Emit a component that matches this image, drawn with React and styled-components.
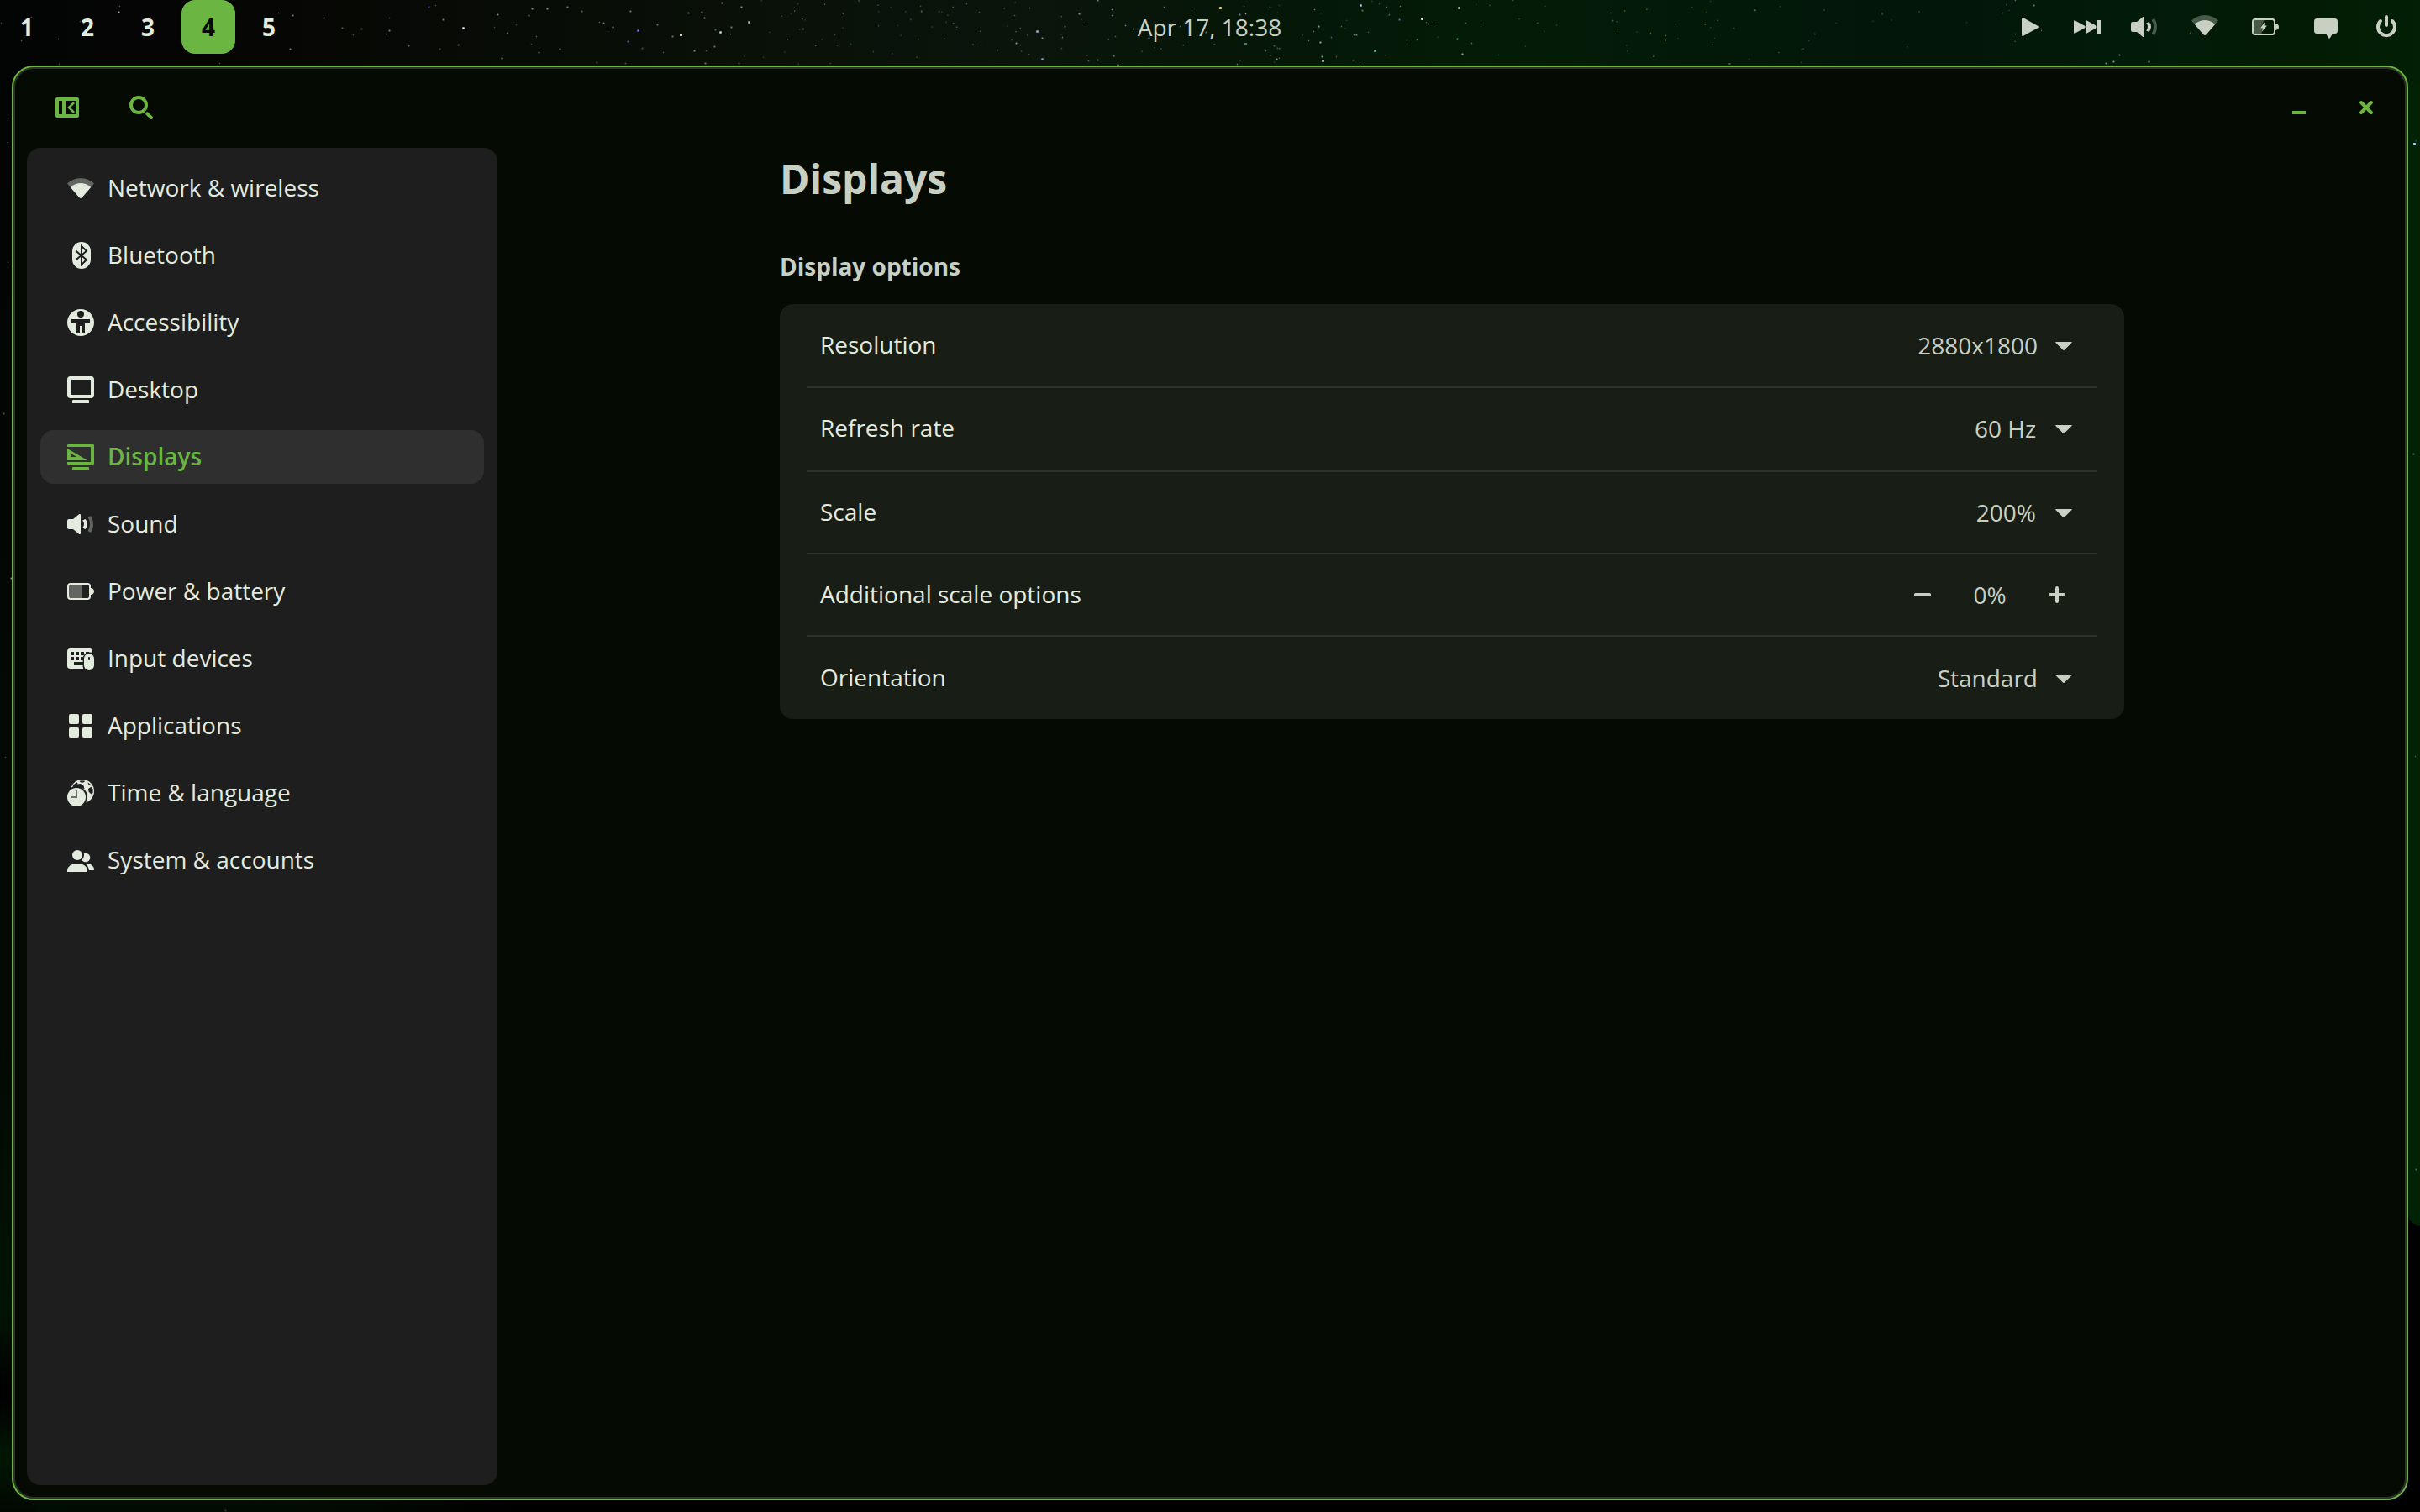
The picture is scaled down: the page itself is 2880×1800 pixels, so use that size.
import styled, { createGlobalStyle, css } from "styled-components";

const colors = {
  accent: "#6bb643",
  text: "#e3ebdf",
  muted: "#c8d0c4",
  window: "#050a03",
  windowEdge: "#2d302b",
  sidebar: "#1e1e1e",
  selected: "#2f2f2f",
  card: "#181d15",
  divider: "#2d322c",
};

// x, y, size, colour
const brightStars = [
  [141, 14, 2, "#d9c9c2"], [142, 7, 1.5, "#7c5c54"], [331, 15, 1.5, "#777"], [348, 18, 2, "#999"],
  [385, 21, 2, "#888"], [345, 58, 2, "#999"], [69, 46, 1.5, "#666"], [25, 48, 1.5, "#667"],
  [37, 20, 1.5, "#666"], [95, 25, 1.5, "#555"], [179, 21, 1.5, "#777"], [1, 27, 1.5, "#2c6a5c"],
  [70, 76, 1.5, "#555"], [261, 75, 1.5, "#555"], [9, 140, 1.5, "#666"], [9, 169, 1.5, "#888"],
  [510, 8, 2, "#5b5be8"], [518, 6, 1.5, "#555"], [551, 33, 2.5, "#e6ecf2"], [527, 23, 2, "#8a9a8a"],
  [463, 36, 2, "#999"], [463, 21, 1.5, "#555"], [407, 33, 2, "#667766"], [430, 34, 2, "#555"],
  [420, 41, 1.5, "#666"], [459, 40, 1.5, "#666"], [486, 54, 2, "#777"], [523, 58, 2, "#555"],
  [545, 53, 2, "#666"], [597, 69, 2, "#bbb"], [592, 17, 2, "#999"], [629, 18, 2, "#888"],
  [633, 10, 2, "#999"], [651, 10, 2, "#aaa"], [675, 8, 2, "#999"], [692, 13, 2, "#777"],
  [603, 39, 1.5, "#777"], [614, 29, 1.5, "#555"], [588, 32, 1.5, "#555"], [638, 43, 1.5, "#777"],
  [632, 52, 1.5, "#555"], [641, 62, 2, "#888"], [666, 58, 2, "#998"], [747, 49, 2, "#6262e8"],
  [759, 36, 2.5, "#6a70f0"], [810, 41, 3, "#f2e3c2"], [800, 43, 2, "#888"], [857, 38, 2.5, "#c9e2f2"],
  [819, 15, 2, "#7474e0"], [750, 13, 2, "#888"], [729, 32, 2, "#aaa"], [718, 27, 2, "#888"],
  [713, 26, 1.5, "#777"], [723, 37, 1.5, "#666"], [782, 29, 2, "#778877"], [838, 21, 2, "#aaa"],
  [835, 14, 2, "#888"], [859, 3, 2, "#999"], [882, 8, 2, "#aaa"], [891, 26, 2.5, "#b8c8b8"],
  [870, 32, 2, "#999"], [851, 35, 2, "#777"], [869, 40, 1.5, "#887"], [850, 55, 2, "#888"],
  [826, 60, 2, "#aaa"], [840, 60, 1.5, "#775"], [839, 75, 2, "#888"], [879, 75, 2, "#666"],
  [764, 57, 2, "#555"], [789, 62, 1.5, "#666"], [744, 75, 2, "#555"], [710, 74, 2, "#555"],
  [1207, 18, 1.5, "#666"], [1225, 9, 1.5, "#555"], [1234, 37, 2.5, "#a8c2f0"], [1240, 45, 2, "#aaa"],
  [1209, 51, 2, "#8aa8d8"], [1214, 53, 1.5, "#777"], [1284, 16, 2, "#aaa"], [1267, 31, 2, "#8a7a5a"],
  [1264, 44, 1.5, "#888"], [1240, 70, 2.5, "#7aa8e0"], [1263, 57, 1.5, "#555"], [1292, 28, 1.5, "#777"],
  [1323, 11, 1.5, "#aaa"], [1323, 18, 1.5, "#889"], [1306, 0, 2, "#999"], [1339, 30, 1.5, "#aaa"],
  [1348, 34, 1.5, "#5a9a8a"], [1325, 66, 2, "#999"], [1330, 77, 2, "#ccc"], [1306, 71, 2, "#888"],
  [1295, 72, 1.5, "#5a8a8a"], [1327, 43, 1.5, "#666"], [1452, 9, 3, "#f0cf7a"], [1385, 8, 1.5, "#888"],
  [1475, 17, 2, "#8aa8d0"], [1482, 16, 1.5, "#bbb"], [1480, 7, 1.5, "#777"], [1511, 8, 1.5, "#888"],
  [1418, 12, 1.5, "#665"], [1404, 31, 1.5, "#48a"], [1482, 52, 3, "#3a8a9a"], [1516, 54, 2, "#3a7a7a"],
  [1520, 57, 2, "#2f6a6a"], [1506, 60, 1.5, "#688"], [1519, 70, 2, "#aa9"], [1472, 76, 1.5, "#888"],
  [1367, 45, 2, "#6aa0e0"], [1435, 38, 2, "#68b"], [1619, 6, 2.5, "#b8c8ff"], [1621, 12, 2, "#8a7a2a"],
  [1564, 11, 1.5, "#999"], [1569, 31, 2, "#9ad0e8"], [1571, 50, 2, "#ccc"], [1584, 44, 1.5, "#4a8a9a"],
  [1563, 37, 1.5, "#785"], [1614, 41, 2, "#6aa8b8"], [1611, 41, 1.5, "#a95"], [1596, 31, 1.5, "#676"],
  [1636, 60, 2.5, "#6ad0c8"], [1573, 67, 2, "#aaa"], [1574, 72, 2.5, "#ddd"], [1590, 67, 1.5, "#666"],
  [1618, 74, 1.5, "#787"], [1557, 48, 1.5, "#777"], [1692, 22, 3, "#f5e3b0"], [1665, 23, 2, "#6a90c8"],
  [1650, 8, 1.5, "#777"], [1666, 7, 1.5, "#888"], [1668, 15, 1.5, "#775"], [1653, 17, 1.5, "#777"],
  [1700, 28, 1.5, "#a96"], [1706, 28, 1.5, "#887"], [1736, 9, 2.5, "#e8e6d8"], [1734, 46, 2, "#7fd0c8"],
  [1740, 64, 2, "#bcb"], [1751, 51, 1.5, "#787"], [1674, 48, 1.5, "#787"], [1686, 47, 1.5, "#787"],
  [1762, 28, 1.5, "#676"], [1744, 27, 1.5, "#585"], [2420, 6, 2, "#8a9a8a"], [2398, 0, 1.5, "#777"],
  [2383, 15, 1.5, "#585"], [2398, 40, 1.5, "#686"], [2429, 36, 1.5, "#475"], [2522, 65, 2, "#7a9a7a"],
  [2506, 75, 2, "#8aa88a"], [2515, 73, 2, "#9ab89a"], [2557, 73, 2, "#9ad0c0"], [2606, 39, 1.5, "#575"],
  [2873, 171, 3, "#9ad8e8"], [2875, 167, 2, "#2a5a3a"], [2875, 1392, 2, "#4a7a8a"], [13, 688, 2, "#9ab"],
  [4, 492, 2, "#666"], [9, 312, 1.5, "#666"], [6, 901, 1.5, "#555"], [2872, 540, 2, "#587"],
  [2874, 900, 1.5, "#475"], [268, 1798, 2, "#444"],
];

// faint dust between the brighter stars of the bar
const dust = Array.from({ length: 150 }, (_, i) => {
  const a = Math.abs(Math.sin(i * 12.9898 + 4.1) * 43758.5453) % 1;
  const b = Math.abs(Math.sin(i * 78.233 + 1.7) * 24634.6345) % 1;
  return [
    i < 60 ? 880 + a * 330 : i < 95 ? 1200 + a * 560 : 1760 + a * 640,
    b * 76,
    i % 9 === 0 ? 2 : 1.5,
    ["#3a4a3a", "#4f5c4f", "#2a4a3e", "#6c6c5c"][i % 4],
  ];
});

const GlobalStyle = createGlobalStyle`
  * {
    box-sizing: border-box;
  }
  body {
    margin: 0;
    background: #000;
    font-family: "Open Sans", "Noto Sans", sans-serif;
    font-size: 28px;
    line-height: 40px;
    color: ${colors.text};
    overflow: hidden;
  }
`;

const Desktop = styled.div`
  position: relative;
  width: 2880px;
  height: 1800px;
  display: flex;
  flex-direction: column;
`;

const WallpaperArt = styled.svg`
  position: absolute;
  inset: 0;
`;

const TopBar = styled.header`
  position: relative;
  display: grid;
  grid-template-columns: 1fr auto 1fr;
  align-items: center;
  height: 64px;
  color: ${colors.muted};
`;

const Workspaces = styled.nav`
  display: flex;
  gap: 8px;
`;

const Workspace = styled.button`
  width: 64px;
  height: 64px;
  padding: 0;
  border: 0;
  border-radius: 16px;
  background: transparent;
  color: ${colors.text};
  font: inherit;
  font-weight: 700;
  ${(props) =>
    props.$active &&
    css`
      background: ${colors.accent};
      color: #050a03;
    `}
`;

const Clock = styled.span`
  padding-right: 1px;
`;

const Tray = styled.div`
  display: flex;
  justify-content: flex-end;
  gap: 40px;
  padding-right: 24px;
`;

const MediaControls = styled.div`
  display: flex;
  gap: 36px;
  margin-right: -4px;
`;

const Icon = styled.svg.attrs({ viewBox: "0 0 32 32", width: 32, height: 32, fill: "currentColor" })`
  display: block;
  flex: none;
`;

const Window = styled.div`
  position: relative;
  flex: 1;
  display: flex;
  flex-direction: column;
  margin: 14px;
  border: 2px solid ${colors.accent};
  border-radius: 26px;
  background: ${colors.window};
  box-shadow: inset 0 0 0 2px ${colors.windowEdge};
  padding: 2px;
`;

const HeaderBar = styled.div`
  display: flex;
  justify-content: space-between;
  height: 94px;
  padding: 30px 30px 0 46px;
  color: ${colors.accent};
`;

const HeaderGroup = styled.div`
  display: flex;
  gap: ${(props) => props.$gap}px;
`;

const WindowBody = styled.div`
  flex: 1;
  display: flex;
  padding: 0 14px 14px;
`;

const Sidebar = styled.aside`
  width: 560px;
  padding: 16px;
  border-radius: 16px;
  background: ${colors.sidebar};
  display: flex;
  flex-direction: column;
  gap: 16px;
`;

const NavItem = styled.a`
  display: flex;
  align-items: center;
  gap: 16px;
  height: 64px;
  padding: 0 32px;
  border-radius: 16px;
  ${(props) =>
    props.$active &&
    css`
      background: ${colors.selected};
      color: ${colors.accent};
      font-weight: 600;
    `}
`;

const NavLabel = styled.span`
  padding-bottom: 2px;
`;

const Page = styled.main`
  width: 1600px;
  margin-left: 336px;
  color: ${colors.muted};
`;

const PageTitle = styled.h1`
  margin: 0;
  padding-top: 3px;
  font-size: 48px;
  line-height: 68px;
  font-weight: 700;
`;

const SectionTitle = styled.h2`
  margin: 50px 0 25px;
  font-size: 28px;
  line-height: 40px;
  font-weight: 700;
`;

const Card = styled.section`
  padding: 0 32px;
  border-radius: 16px;
  background: ${colors.card};
`;

const Row = styled.div`
  display: flex;
  align-items: center;
  justify-content: space-between;
  height: ${(props) => props.$height}px;
  padding: 0 24px ${(props) => props.$bottom || 0}px 16px;
  & + & {
    border-top: 2px solid ${colors.divider};
  }
`;

const RowLabel = styled.span`
  padding-bottom: 2px;
  color: ${colors.text};
`;

const Dropdown = styled.div`
  display: flex;
  align-items: center;
  gap: ${(props) => props.$gap}px;
`;

const Stepper = styled.div`
  display: grid;
  grid-template-columns: 32px 128px 32px;
  align-items: center;
  text-align: center;
  margin-right: 8px;
`;

function Wallpaper() {
  return (
    <WallpaperArt width="2880" height="1800" viewBox="0 0 2880 1800">
      <defs>
        <linearGradient id="sky">
          <stop offset="0" stopColor="#030404" />
          <stop offset="0.12" stopColor="#060704" />
          <stop offset="0.3" stopColor="#091008" />
          <stop offset="0.43" stopColor="#0a150c" />
          <stop offset="0.5" stopColor="#061607" />
          <stop offset="0.62" stopColor="#031c07" />
          <stop offset="0.8" stopColor="#02160a" />
          <stop offset="0.9" stopColor="#021c09" />
          <stop offset="0.95" stopColor="#031a03" />
          <stop offset="1" stopColor="#022006" />
        </linearGradient>
        <linearGradient id="leftEdge" x2="0" y2="1">
          <stop offset="0" stopColor="#030404" />
          <stop offset="0.7" stopColor="#020b02" />
          <stop offset="0.86" stopColor="#021302" />
          <stop offset="0.92" stopColor="#000" />
          <stop offset="0.96" stopColor="#021602" />
          <stop offset="1" stopColor="#010801" />
        </linearGradient>
        <linearGradient id="bottomEdge">
          <stop offset="0" stopColor="#010d01" />
          <stop offset="0.12" stopColor="#020a02" />
          <stop offset="0.2" stopColor="#000" />
        </linearGradient>
      </defs>
      <rect width="2880" height="1800" fill="#000" />
      <rect width="2880" height="110" fill="url(#sky)" />
      <rect y="78" width="44" height="1722" fill="url(#leftEdge)" />
      <rect x="44" y="1750" width="2836" height="50" fill="url(#bottomEdge)" />
      <path d="M2840 100H2880V1459Q2869 1458 2866 1448H2840Z" fill="#022206" />
      {[...brightStars, ...dust].map(([x, y, size, color], i) => (
        <rect key={i} x={x - size / 2 + 0.5} y={y - size / 2 + 0.5} width={size} height={size} rx={size / 4} fill={color} opacity={size > 2 ? 1 : 0.8} />
      ))}
    </WallpaperArt>
  );
}

const VolumeIcon = () => (
  <Icon>
    <path d="M2 10H7L14 4.3Q16 3.4 16 5V27Q16 28.6 14 27.7L7 22H2Q0 22 0 20V12Q0 10 2 10Z" />
    <path d="M18.2 11.4L21.6 10Q24 12.5 24 16T21.6 22L18.2 20.6Q20 18.6 20 16T18.2 11.4Z" />
    <path d="M24.6 7.8L28.2 6Q31 10.5 31 16T28.2 26L24.6 24.2Q27 20.5 27 16T24.6 7.8Z" opacity=".35" />
  </Icon>
);

const WifiIcon = ({ offset = 0 }) => (
  <Icon>
    <g transform={`translate(0 ${offset})`}>
      <path d="M0 10.6Q7 4 16 4T32 10.6L28.2 15Q22.5 10 16 10T3.8 15Z" opacity=".35" />
      <path d="M3.8 15Q9 10 16 10T28.2 15L17.8 27Q16 29 14.2 27Z" />
    </g>
  </Icon>
);

const BatteryIcon = ({ charging }) => (
  <Icon>
    <rect x="1" y="7" width="26" height="18" rx="3" fill="none" stroke="currentColor" strokeWidth="2" />
    <path d="M28 12Q32 12.5 32 16T28 20Z" />
    {charging ? (
      <>
        <path d="M2 8H14.5L10 17.5H12.5L11.5 24H2Z" opacity=".35" />
        <path d="M15.2 10L10 17.4H13L11.8 21.8L18 14.6H14.5Z" />
      </>
    ) : (
      <rect x="2" y="8" width="16" height="16" opacity=".35" />
    )}
  </Icon>
);

const BluetoothIcon = () => (
  <Icon>
    <rect x="6" width="22" height="32" rx="11" />
    <path d="M10.2 10.6L23 21.2L17 27V5L23 10.8L10.2 21.4" fill="none" stroke={colors.sidebar} strokeWidth="2" />
  </Icon>
);

const AccessibilityIcon = () => (
  <Icon>
    <circle cx="16" cy="16" r="16" />
    <g fill={colors.sidebar}>
      <circle cx="16" cy="6" r="4" />
      <path d="M5 12H27V16H21V28H17V20H15V28H11V16H5Z" />
    </g>
  </Icon>
);

const DesktopIcon = () => (
  <Icon>
    <rect x="2" y="2" width="28" height="22" rx="1.8" fill="none" stroke="currentColor" strokeWidth="4" />
    <path d="M7 28H25Q26 28 26 29V32H6V29Q6 28 7 28Z" />
  </Icon>
);

const DisplaysIcon = () => (
  <Icon>
    <path d="M0 4V3Q0 0 3 0H29Q32 0 32 3V23Q32 26 29 26H3Q0 26 0 23V22H28V4Z" />
    <path d="M0 6L24 20H0ZM4 11.6V16H11.2Z" fillRule="evenodd" />
    <path d="M7 28H25Q26 28 26 29V32H6V29Q6 28 7 28Z" />
  </Icon>
);

const InputIcon = () => (
  <Icon>
    <rect y="4" width="30" height="24" rx="3.5" />
    <g fill={colors.sidebar}>
      <path d="M4 8H8V12H4ZM10 8H14V12H10ZM16 8H20V12H16ZM22 8H26V12H22ZM4 14H8V18H4ZM10 14H14V18H10ZM16 14H20V18H16ZM8 20H20V24H8Z" />
      <rect x="18.6" y="8.6" width="16" height="24" rx="7.4" />
    </g>
    <rect x="20" y="10" width="12" height="20" rx="6" />
    <rect x="25" y="14" width="2" height="4" rx="1" fill={colors.sidebar} />
  </Icon>
);

const AppsIcon = () => (
  <Icon>
    <rect x="2" y="2" width="12" height="12" rx="2" />
    <rect x="18" y="2" width="12" height="12" rx="2" />
    <rect x="2" y="18" width="12" height="12" rx="2" />
    <rect x="18" y="18" width="12" height="12" rx="2" />
  </Icon>
);

const TimeIcon = () => (
  <Icon>
    <circle cx="18" cy="14" r="14" />
    <g fill={colors.sidebar}>
      <path d="M6.2 8.6Q8 5 11.5 3.2L12.6 4.8L10 7.4L9.8 9.5ZM14.4 1.8Q18 .8 21.4 1.8L19.5 3.4H16Z" />
      <path d="M25 11L28.6 8.8L30.6 11.4V16L28.4 17.4L25.6 14.6Z" />
      <path d="M24.4 3.4L27.4 5.4L28.4 7.4L25.4 6.2Z" />
      <circle cx="11" cy="21" r="13" />
      <path d="M8 8.5L11.5 5.6L16 5L19.5 7.6L20.5 11L15 10Z" />
    </g>
    <circle cx="11" cy="21" r="11" />
    <path d="M11 13V21H5" fill="none" stroke={colors.sidebar} strokeWidth="2" opacity=".6" />
  </Icon>
);

const AccountsIcon = () => (
  <Icon>
    <circle cx="22" cy="13" r="5.3" />
    <path d="M20 20Q32 19 32 28H20Z" />
    <g fill={colors.sidebar}>
      <circle cx="12" cy="10" r="8" />
      <path d="M12 18Q26 18 26 30H12Z" />
    </g>
    <circle cx="12" cy="10" r="6" />
    <path d="M0 30V28Q1.5 20 12 20T24 28V30Z" />
  </Icon>
);

const CaretIcon = () => (
  <Icon>
    <path d="M6.8 12H25.2Q26.4 12.2 25.6 13L17 21.4Q16 22.4 15 21.4L6.4 13Q5.6 12.2 6.8 12Z" />
  </Icon>
);

const navItems = [
  ["Network & wireless", WifiIcon],
  ["Bluetooth", BluetoothIcon],
  ["Accessibility", AccessibilityIcon],
  ["Desktop", DesktopIcon],
  ["Displays", DisplaysIcon],
  ["Sound", VolumeIcon],
  ["Power & battery", BatteryIcon],
  ["Input devices", InputIcon],
  ["Applications", AppsIcon],
  ["Time & language", TimeIcon],
  ["System & accounts", AccountsIcon],
];

function Select({ value, gap = 16 }) {
  return (
    <Dropdown $gap={gap}>
      <span>{value}</span>
      <CaretIcon />
    </Dropdown>
  );
}

export default function App() {
  return (
    <Desktop>
      <GlobalStyle />
      <Wallpaper />
      <TopBar>
        <Workspaces>
          {[1, 2, 3, 4, 5].map((n) => (
            <Workspace key={n} $active={n === 4}>
              {n}
            </Workspace>
          ))}
        </Workspaces>
        <Clock>Apr 17, 18:38</Clock>
        <Tray>
          <MediaControls>
            <Icon>
              <path d="M6 6.4Q6 4.4 8 5.2L25 14.8Q27 16 25 17.2L8 26.8Q6 27.6 6 25.6Z" />
            </Icon>
            <Icon>
              <path d="M0 9.2Q0 7.6 1.6 8.4L13 14.8Q14.6 16 13 17.2L1.6 23.6Q0 24.4 0 22.8ZM14 9.2Q14 7.6 15.6 8.4L27 14.8Q28.6 16 27 17.2L15.6 23.6Q14 24.4 14 22.8ZM28 8H32V24H28Z" />
            </Icon>
          </MediaControls>
          <VolumeIcon />
          <WifiIcon offset={-2} />
          <BatteryIcon charging />
          <Icon>
            <path d="M5.5 6H26.5Q30 6 30 9.5V20.5Q30 24 26.5 24H24L21 29Q20 30.4 19 29L16 24H5.5Q2 24 2 20.5V9.5Q2 6 5.5 6Z" />
          </Icon>
          <Icon>
            <path d="M9 9A10 10 0 1 0 23 9M16 4V14" fill="none" stroke="currentColor" strokeWidth="4" strokeLinecap="round" />
          </Icon>
        </Tray>
      </TopBar>
      <Window>
        <HeaderBar>
          <HeaderGroup $gap={56}>
            <Icon>
              <path d="M4 4H28Q30 4 30 6V26Q30 28 28 28H4Q2 28 2 26V6Q2 4 4 4ZM6 8V24H10V8ZM14 8V24H26V8Z" fillRule="evenodd" />
              <path d="M23.4 10.8L18 16L23.4 21.2" fill="none" stroke="currentColor" strokeWidth="2.6" strokeLinecap="round" />
            </Icon>
            <Icon fill="none" stroke="currentColor" strokeWidth="4" strokeLinecap="round">
              <circle cx="13" cy="13" r="9" fill="none" />
              <path d="M23.2 23.4L28 28" />
            </Icon>
          </HeaderGroup>
          <HeaderGroup $gap={48}>
            <Icon>
              <rect x="8" y="20" width="16" height="4" />
            </Icon>
            <Icon>
              <path d="M10 10L22 22M22 10L10 22" stroke="currentColor" strokeWidth="4" strokeLinecap="round" />
            </Icon>
          </HeaderGroup>
        </HeaderBar>
        <WindowBody>
          <Sidebar>
            {navItems.map(([label, Glyph]) => (
              <NavItem key={label} $active={label === "Displays"}>
                <Glyph />
                <NavLabel>{label}</NavLabel>
              </NavItem>
            ))}
          </Sidebar>
          <Page>
            <PageTitle>Displays</PageTitle>
            <SectionTitle>Display options</SectionTitle>
            <Card>
              <Row $height={98}>
                <RowLabel>Resolution</RowLabel>
                <Select value="2880x1800" gap={15} />
              </Row>
              <Row $height={100} $bottom={2}>
                <RowLabel>Refresh rate</RowLabel>
                <Select value="60 Hz" gap={17} />
              </Row>
              <Row $height={98}>
                <RowLabel>Scale</RowLabel>
                <Select value="200%" gap={17} />
              </Row>
              <Row $height={98}>
                <RowLabel>Additional scale options</RowLabel>
                <Stepper>
                  <Icon>
                    <rect x="6" y="14" width="20" height="4" rx="1.5" />
                  </Icon>
                  <span>0%</span>
                  <Icon>
                    <path d="M8 16H24M16 8V24" stroke="currentColor" strokeWidth="4" strokeLinecap="round" />
                  </Icon>
                </Stepper>
              </Row>
              <Row $height={100}>
                <RowLabel>Orientation</RowLabel>
                <Select value="Standard" gap={15} />
              </Row>
            </Card>
          </Page>
        </WindowBody>
      </Window>
    </Desktop>
  );
}
